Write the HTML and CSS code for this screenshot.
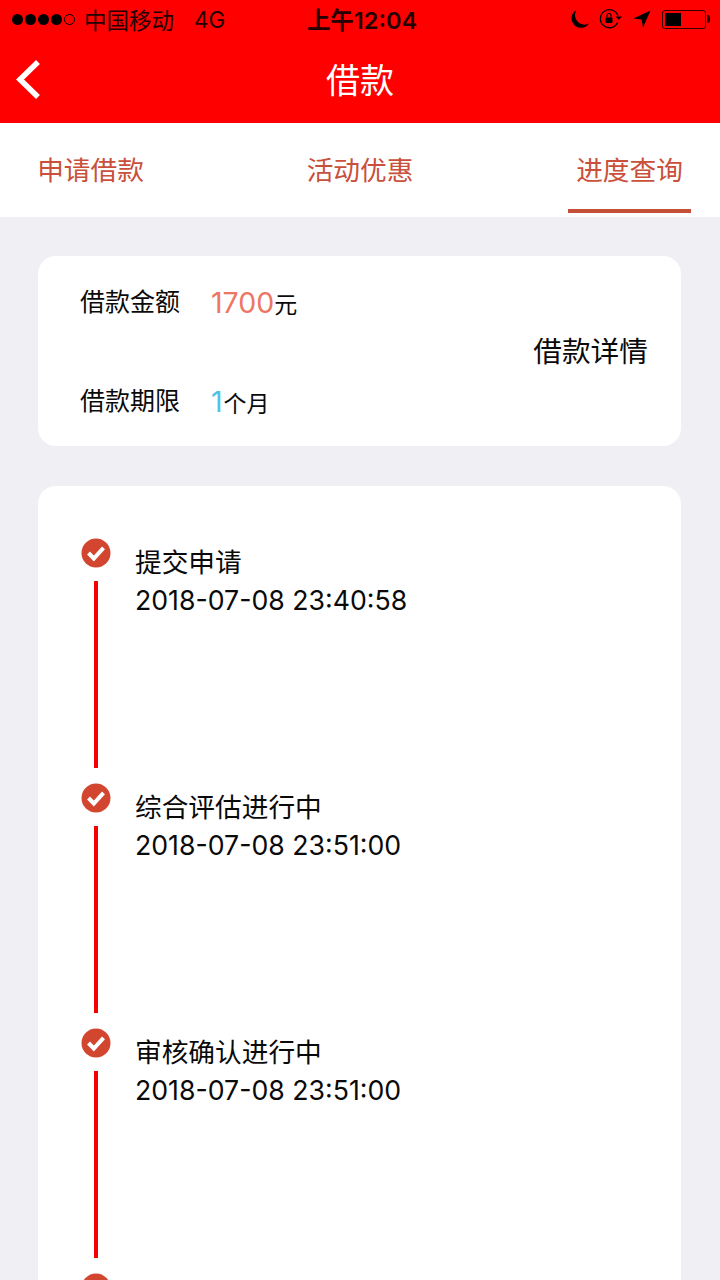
FILE: index.html
```html
<!DOCTYPE html>
<html lang="zh-CN">
<head>
    <meta charset="UTF-8">
    <meta name="viewport" content="width=device-width, initial-scale=1.0">
    <title>借款</title>
    <link rel="stylesheet" href="styles.css">
</head>
<body>
    <div class="page">
        <header class="top-bar">
            <div class="status-bar">
                <div class="status-left">
                    <span class="signal">
                        <i class="dot"></i><i class="dot"></i><i class="dot"></i><i class="dot"></i><i class="dot dot-empty"></i>
                    </span>
                    <span class="carrier">中国移动</span>
                    <span class="network">4G</span>
                </div>
                <div class="status-time">上午12:04</div>
                <div class="status-right">
                    <svg class="icon-moon" width="20" height="20" viewBox="0 0 20 20"><path d="M6.500 1A9.500 9.500 0 1 0 19 14.500 9.500 9.500 0 0 1 6.500 1Z" fill="#000"/></svg>
                    <svg class="icon-lock" width="24" height="22" viewBox="0 0 24 22">
                        <path d="M18.600 14.500A9 9 0 1 1 19 8" fill="none" stroke="#000" stroke-width="1.300"/>
                        <path d="M16.500 8.500h6.500l-3.200 3.200Z" fill="#000"/>
                        <rect x="6.500" y="9.500" width="7" height="5.500" rx="1" fill="#000"/>
                        <path d="M8 9.500V7.500a2 2 0 0 1 4 0v2" fill="none" stroke="#000" stroke-width="1.200"/>
                    </svg>
                    <svg class="icon-location" width="18" height="18" viewBox="0 0 18 18"><path d="M17.500 0.500 0.500 8.500 8.500 9.500 10 17.500Z" fill="#000"/></svg>
                    <div class="battery"><div class="battery-level"></div></div>
                </div>
            </div>
            <div class="nav-bar">
                <svg class="back-icon" width="30" height="44" viewBox="0 0 30 44"><path d="M25 4 7 21.500 25 39" fill="none" stroke="#fff" stroke-width="5.500"/></svg>
                <h1 class="nav-title">借款</h1>
            </div>
        </header>

        <nav class="tabs">
            <div class="tab">申请借款</div>
            <div class="tab">活动优惠</div>
            <div class="tab tab-active">进度查询</div>
        </nav>

        <main class="content">
            <section class="card summary">
                <div class="summary-rows">
                    <div class="summary-row">
                        <span class="summary-label">借款金额</span>
                        <span class="summary-value"><b class="amount">1700</b>元</span>
                    </div>
                    <div class="summary-row">
                        <span class="summary-label">借款期限</span>
                        <span class="summary-value"><b class="term">1</b>个月</span>
                    </div>
                </div>
                <div class="summary-link">借款详情</div>
            </section>

            <section class="card timeline">
                <div class="step">
                    <div class="step-marker">
                        <svg class="check" width="30" height="30" viewBox="0 0 30 30"><circle cx="15" cy="15" r="14.500" fill="#d2452f"/><path d="M7.500 15 12.800 20.500 22.500 9.800" fill="none" stroke="#fff" stroke-width="4"/></svg>
                        <div class="step-line"></div>
                    </div>
                    <div class="step-text">
                        <div>提交申请</div>
                        <div class="step-date">2018-07-08 23:40:58</div>
                    </div>
                </div>
                <div class="step">
                    <div class="step-marker">
                        <svg class="check" width="30" height="30" viewBox="0 0 30 30"><circle cx="15" cy="15" r="14.500" fill="#d2452f"/><path d="M7.500 15 12.800 20.500 22.500 9.800" fill="none" stroke="#fff" stroke-width="4"/></svg>
                        <div class="step-line"></div>
                    </div>
                    <div class="step-text">
                        <div>综合评估进行中</div>
                        <div class="step-date">2018-07-08 23:51:00</div>
                    </div>
                </div>
                <div class="step">
                    <div class="step-marker">
                        <svg class="check" width="30" height="30" viewBox="0 0 30 30"><circle cx="15" cy="15" r="14.500" fill="#d2452f"/><path d="M7.500 15 12.800 20.500 22.500 9.800" fill="none" stroke="#fff" stroke-width="4"/></svg>
                        <div class="step-line"></div>
                    </div>
                    <div class="step-text">
                        <div>审核确认进行中</div>
                        <div class="step-date">2018-07-08 23:51:00</div>
                    </div>
                </div>
                <div class="step">
                    <div class="step-marker">
                        <svg class="check" width="30" height="30" viewBox="0 0 30 30"><circle cx="15" cy="15" r="14.500" fill="#d2452f"/></svg>
                    </div>
                </div>
            </section>
        </main>
    </div>
</body>
</html>
```

FILE: styles.css
```css
* {
    box-sizing: border-box;
}

html, body {
    margin: 0;
    padding: 0;
}

body {
    font-family: Inter, "Noto Sans CJK SC", sans-serif;
    color: #0a0a0a;
    background: #efeff4;
}

.page {
    width: 720px;
    height: 1280px;
    overflow: hidden;
}

.top-bar {
    height: 123px;
    background: #fe0000;
}

.status-bar {
    position: relative;
    display: flex;
    justify-content: space-between;
    align-items: center;
    height: 38px;
    padding: 0 12px;
    color: #260000;
}

.status-left {
    display: flex;
    align-items: center;
    font-size: 22.500px;
}

.signal {
    display: flex;
    gap: 2px;
    margin-right: 9px;
}

.dot {
    width: 11px;
    height: 11px;
    border-radius: 50%;
    background: #000;
}

.dot-empty {
    background: none;
    border: 1px solid #000;
}

.network {
    margin-left: 20px;
}

.status-time {
    position: absolute;
    left: 4px;
    right: 0;
    text-align: center;
    font-size: 23.500px;
    font-weight: 600;
}

.status-right {
    display: flex;
    align-items: center;
    padding-right: 2px;
}

.icon-moon {
    margin-right: 9px;
}

.icon-lock {
    margin-right: 10px;
}

.icon-location {
    margin-right: 11px;
}

.battery {
    position: relative;
    width: 44px;
    height: 19px;
    padding: 2px;
    border: 1.500px solid #300;
    border-radius: 3px;
}

.battery::after {
    content: "";
    position: absolute;
    right: -5px;
    top: 4px;
    width: 3px;
    height: 8px;
    background: #300;
    border-radius: 0 2px 2px 0;
}

.battery-level {
    width: 16px;
    height: 100%;
    background: #000;
}

.nav-bar {
    position: relative;
    display: flex;
    justify-content: center;
    align-items: center;
    height: 85px;
}

.back-icon {
    position: absolute;
    left: 13px;
    top: 20px;
}

.nav-title {
    margin: 0 0 4px;
    font-size: 34px;
    font-weight: normal;
    color: #fff;
}

.tabs {
    display: flex;
    justify-content: space-between;
    height: 94px;
    padding: 0 29px 0 29px;
    background: #fff;
}

.tab {
    width: 123px;
    height: 90px;
    line-height: 95px;
    text-align: center;
    font-size: 26.700px;
    color: #c9503a;
}

.tab-active {
    border-bottom: 4px solid #c5503a;
}

.content {
    padding: 39px 39px 0 38px;
}

.card {
    background: #fff;
    border-radius: 18px;
}

.summary {
    display: flex;
    justify-content: space-between;
    align-items: center;
    height: 190px;
    padding: 0 33px 0 42px;
    margin-bottom: 40px;
}

.summary-rows {
    display: flex;
    flex-direction: column;
    gap: 50px;
}

.summary-row {
    display: flex;
    align-items: center;
    height: 49px;
}

.summary-label {
    width: 131px;
    margin-bottom: 4px;
    font-size: 25px;
}

.summary-value {
    margin-top: 2px;
    font-size: 23px;
}

.summary-value b {
    font-size: 28.500px;
    font-weight: normal;
}

.amount {
    color: #ee7664;
}

.term {
    margin-right: 1px;
    color: #4dc3e8;
}

.summary-link {
    margin-bottom: 4px;
    font-size: 28.700px;
}

.timeline {
    padding: 52px 0 0 43px;
}

.step {
    display: flex;
    height: 245px;
}

.step-marker {
    display: flex;
    flex-direction: column;
    align-items: center;
    width: 30px;
}

.check {
    flex: none;
}

.step-line {
    width: 4px;
    height: 187px;
    margin-top: 13px;
    background: #f60000;
}

.step-text {
    margin: 5px 0 0 24px;
    font-size: 26.700px;
    line-height: 38px;
}

.step-date {
    font-size: 26.700px;
}
```
